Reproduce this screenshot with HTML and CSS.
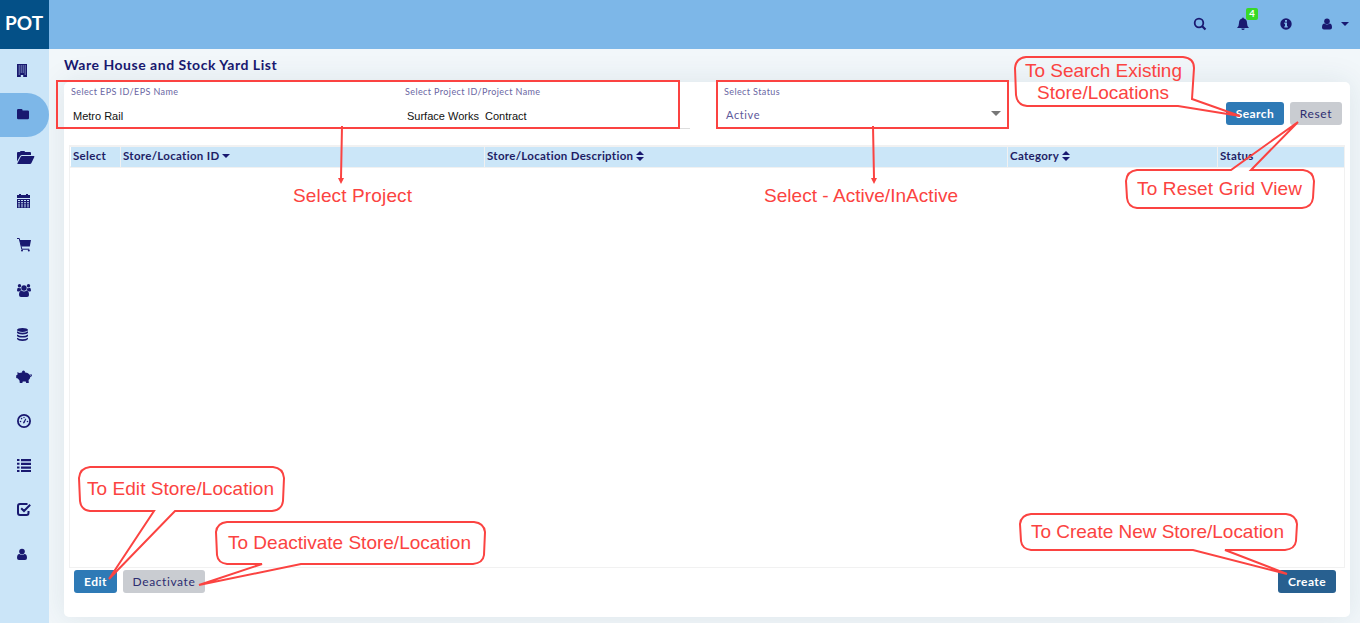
FILE: index.html
```html
<!DOCTYPE html>
<html lang="en">
<head>
<meta charset="utf-8">
<title>Ware House and Stock Yard List</title>
<link rel="stylesheet" href="styles.css">
</head>
<body>
<div class="app">
  <aside class="sidebar">
    <div class="logo"><span>POT</span></div>
    <nav class="menu">
      <a class="item"><svg viewBox="0 0 20 20"><path fill-rule="evenodd" d="M1 3h10v13H7.200v-2h-2.400v2H1zM2.700 4.500v1h1v-1zm2 0v1h1v-1zm2 0v1h1v-1zm2 0v1h1v-1zM2.700 6.500v1h1v-1zm2 0v1h1v-1zm2 0v1h1v-1zm2 0v1h1v-1zM2.700 8.500v1h1v-1zm2 0v1h1v-1zm2 0v1h1v-1zm2 0v1h1v-1zM2.700 10.500v1h1v-1zm2 0v1h1v-1zm2 0v1h1v-1zm2 0v1h1v-1zM2.700 12.500v1h1v-1zm6 0v1h1v-1z"/></svg></a>
      <a class="item active"><svg viewBox="0 0 20 20"><path d="M2.200 4h3.200q1.200 0 1.200 1.400h5.200q1.200 0 1.200 1.200V13q0 1.200-1.200 1.200H2.200Q1 14.200 1 13V5.200Q1 4 2.200 4z"/></svg></a>
      <a class="item"><svg viewBox="0 0 20 20"><path d="M1 12.500V4q0-1 1-1h2q0-1 1-1h3q1 0 1 1h5q1 0 1 1v2H6q-1.200 0-2 1.200zM6 7h11.800q.9 0 .5.900l-3 6.300q-.4.800-1.300.8H1.800q-.8 0-.4-.8l3.200-6.300Q5 7 6 7z"/></svg></a>
      <a class="item"><svg viewBox="0 0 20 20"><path d="M1 2h2V1h2v1h5V1h2v1h2v3H1z"/><path fill-rule="evenodd" d="M1 6h13v9H1zM2 7v1h2V7zm3 0v1h2V7zm3 0v1h2V7zm3 0v1h2V7zM2 9.300v1h2v-1zm3 0v1h2v-1zm3 0v1h2v-1zm3 0v1h2v-1zM2 11.500v1h2v-1zm3 0v1h2v-1zm3 0v1h2v-1zm3 0v1h2v-1zM2 13.500v.8h2v-.8zm3 0v.8h2v-.8zm3 0v.8h2v-.8zm3 0v.8h2v-.8z"/></svg></a>
      <a class="item"><svg viewBox="0 0 20 20"><path d="M1 1.500h2.300L5.800 12.200h7.400" fill="none" stroke="#191970"/><path d="M3.500 3H15l-1.200 6.600H5.400z"/><circle cx="6" cy="13.400" r="1"/><circle cx="12.800" cy="13.400" r="1"/></svg></a>
      <a class="item"><svg viewBox="0 0 20 20"><circle cx="3.500" cy="4.800" r="1.700"/><circle cx="12.500" cy="4.800" r="1.700"/><circle cx="8" cy="7" r="2.700"/><path d="M1 9.500q0-2.700 1.300-2.700 1 .6 2.300.3.100 1.400.9 2.400-1.400 0-2.300 1H2q-1 0-1-1zM15 9.500q0-2.700-1.300-2.700-1 .6-2.300.3-.1 1.400-.9 2.400 1.400 0 2.300 1H14q1 0 1-1zM3 14q0-4.200 2.500-4.200 2.500 1.400 5 0Q13 9.800 13 14q0 2-2 2H5q-2 0-2-2z"/></svg></a>
      <a class="item"><svg viewBox="0 0 20 20"><ellipse cx="6.500" cy="4.900" rx="5.500" ry="2"/><path d="M1 6.300q5.500 3 11 0v1.500q-1.200 1.600-5.500 1.600T1 7.800zM1 9.500q5.500 3 11 0V11q-1.200 1.600-5.500 1.600T1 11zM1 12.700q5.500 3 11 0V14q-1.200 1.900-5.500 1.900T1 14z"/></svg></a>
      <a class="item"><svg viewBox="0 0 20 20"><circle cx="7.500" cy="2.900" r="1.500"/><path d="M1.600 5 1.200 3.300l2.500.6Q7.500 2.800 11.500 3.900q2.300 1 2.700 2.900l.6-.2-.4-1.500.9-.2.700 2-1.700 1q-.2 2-1.700 3.200l.2 2.900h-2.600l-.5-1.400H6.800L6.300 14H3.800l-.3-2.400L1.800 9.500.2 9V6.300l1-.3z"/></svg></a>
      <a class="item"><svg viewBox="0 0 20 20"><circle cx="8" cy="8" r="6.100" fill="none" stroke="#191970" stroke-width="1.800"/><path d="m7 9.500 2.500-4 .8.500-1.800 4q-1.200 1-1.500-.5z"/><circle cx="4.500" cy="8.500" r=".8"/><circle cx="11.500" cy="8.500" r=".8"/><circle cx="5.600" cy="5.600" r=".8"/><circle cx="8" cy="4.500" r=".7"/></svg></a>
      <a class="item"><svg viewBox="0 0 20 20"><path d="M1 2h2.500v2H1zm4 0h10v2.300H5zM1 5.800h2.500v2H1zm4-.1h10V8H5zM1 9.400h2.500v2H1zm4 0h10v2.300H5zM1 13h2.500v2H1zm4 0h10v2H5z"/></svg></a>
      <a class="item"><svg viewBox="0 0 20 20"><path d="M11.500 3H4Q2 3 2 5v7q0 2 2 2h6.500q2 0 2-2v-2M5.200 7.200 8 10l6.200-6.200" fill="none" stroke="#191970" stroke-width="2"/></svg></a>
      <a class="item"><svg viewBox="0 0 20 20"><circle cx="6" cy="6.600" r="2.800"/><path d="M1 13q0-4 2.500-4Q6 11 8.500 9 11 9 11 13q0 2-2 2H3q-2 0-2-2z"/></svg></a>
    </nav>
  </aside>
  <div class="main">
    <header class="topbar">
      <svg class="ico" viewBox="0 0 14 14"><circle cx="6" cy="6" r="4.300" fill="none" stroke="#191970" stroke-width="1.800"/><path d="m9 9 3.500 3.500" stroke="#191970" stroke-width="2.200"/></svg>
      <span class="bell"><svg class="ico" viewBox="0 0 14 14"><path d="M7 .5q.8 0 .8 1Q11 2.200 11 6q0 3.500 2 5H1q2-1.500 2-5 0-3.800 3.200-4.500 0-1 .8-1zM5.300 11.500h3.400Q8.500 13 7 13t-1.700-1.500z"/></svg><b class="badge">4</b></span>
      <svg class="ico" viewBox="0 0 14 14"><path fill-rule="evenodd" d="M7 1.300a5.700 5.700 0 1 0 0 11.400 5.700 5.700 0 0 0 0-11.400zM6 3h2v1.700H6zM5.300 5.600H8v3.600h.8v1.300H5.300V9.200H6V6.900h-.7z"/></svg>
      <span class="account"><svg class="ico" viewBox="0 0 14 14"><circle cx="7" cy="4.300" r="2.800"/><path d="M2 10.500q0-4 2.500-4Q7 8.500 9.500 6.500 12 6.500 12 10.500q0 2-2 2H4q-2 0-2-2z"/></svg><i class="caret"></i></span>
    </header>
    <h1 class="title">Ware House and Stock Yard List</h1>
    <section class="card">
      <div class="filters">
        <div class="project">
          <div class="field"><label>Select EPS ID/EPS Name</label><p class="plain">Metro Rail</p></div>
          <div class="field"><label>Select Project ID/Project Name</label><p class="plain">Surface Works&nbsp; Contract</p></div>
        </div>
        <div class="field status"><label>Select Status</label><p class="select">Active<i class="arrow"></i></p></div>
        <div class="actions"><button class="btn primary search">Search</button><button class="btn muted reset">Reset</button></div>
      </div>
      <div class="grid">
        <div class="head">
          <span>Select</span>
          <span>Store/Location ID<i class="sort"><i class="down"></i></i></span>
          <span>Store/Location Description<i class="sort"><i class="up"></i><i class="down"></i></i></span>
          <span>Category<i class="sort"><i class="up"></i><i class="down"></i></i></span>
          <span>Status</span>
        </div>
      </div>
      <div class="footer">
        <button class="btn primary edit">Edit</button><button class="btn muted deactivate">Deactivate</button>
        <button class="btn dark create">Create</button>
      </div>
    </section>
  </div>
</div>
<svg class="notes" viewBox="0 0 1360 623">
  <g class="line">
    <path d="M57 81h622v47H57zM717 81h291v47H717z"/>
    <path d="M342 126 341 178M873 126 874 178"/>
    <path d="M1026 57H1183Q1194 58 1194 68L1192 99 1240 116 1178 106H1027Q1017 105 1016 95L1015 68Q1016 58 1026 57z"/>
    <path d="M1137 170H1231L1298 122 1251 170H1303Q1313 171 1314 181L1313 198Q1312 207 1302 208H1137Q1128 207 1127 198L1126 181Q1127 171 1137 170z"/>
    <path d="M90 467H273Q283 468 284 478L283 501Q282 510 272 511H175L109 579 154 511H90Q81 510 80 501L79 478Q80 468 90 467z"/>
    <path d="M227 522H474Q484 523 485 532L484 555Q483 563 473 564H301L199 585 262 564H227Q218 563 217 555L216 532Q217 523 227 522z"/>
    <path d="M1031 514H1286Q1296 515 1297 524L1296 541Q1295 549 1285 550H1225L1287 574 1193 550H1031Q1022 549 1021 541L1020 524Q1021 515 1031 514z"/>
  </g>
  <path class="tip" d="M338 178h6l-3 6zM871 178h6l-3 6z"/>
  <g class="words">
    <text x="293" y="202" textLength="119">Select Project</text>
    <text x="764" y="202" textLength="194">Select - Active/InActive</text>
    <text x="1025" y="77" textLength="157">To Search Existing</text>
    <text x="1037" y="99" textLength="132">Store/Locations</text>
    <text x="1137" y="195" textLength="165">To Reset Grid View</text>
    <text x="87" y="495" textLength="187">To Edit Store/Location</text>
    <text x="228" y="549" textLength="243">To Deactivate Store/Location</text>
    <text x="1031" y="538" textLength="253">To Create New Store/Location</text>
  </g>
</svg>
</body>
</html>
```
FILE: styles.css
```css
* { box-sizing: border-box; }
body { margin: 0; height: 623px; overflow: hidden; font-family: Lato, sans-serif; color: #191970; background: #f2f7fa; }
.app { display: flex; height: 623px; }
.sidebar { width: 49px; flex: none; background: #cbe5f8; z-index: 1; }
.logo { height: 49px; background: #045087; color: #fff; font-weight: 700; font-size: 19px; line-height: 45px; padding-left: 5px; letter-spacing: 0; }
.menu { display: flex; flex-direction: column; }
.item { height: 44px; padding-left: 16px; display: flex; align-items: center; }
.item.active { background: #7db7e8; border-radius: 0 22px 22px 0; }
.item svg { width: 20px; height: 20px; fill: #191970; }
.main { flex: 1; display: flex; flex-direction: column; min-width: 0; }
.topbar { height: 49px; flex: none; background: #7db7e8; display: flex; align-items: center; justify-content: flex-end; gap: 29px; padding: 0 11px 2px 0; z-index: 1; }
.ico { width: 14px; height: 14px; fill: #191970; display: block; }
.bell { position: relative; }
.badge { position: absolute; left: 10px; top: -9px; width: 12px; height: 12px; border-radius: 2px; background: #38d926; color: #fff; font-size: 9.500px; line-height: 11px; text-align: center; }
.account { display: flex; align-items: center; gap: 7px; margin-left: -2px; }
.caret { border: 4px solid transparent; border-top-color: #191970; border-bottom: 0; }
.title { margin: 0; padding-left: 15px; height: 33px; line-height: 32px; font-size: 14px; font-weight: 700; letter-spacing: .52px; white-space: nowrap; }
.card { margin: 0 10px 0 15px; height: 535px; background: #fff; border-radius: 5px; box-shadow: 0 0 30px rgba(30, 70, 90, .1); padding: 0 5px; }
.filters { display: flex; height: 63px; }
.project { display: flex; width: 619px; height: 47px; margin-left: 2px; border-bottom: 1px solid #ddd; }
.field { width: 334px; flex: none; padding-top: 4px; }
.field + .field { width: 285px; }
.field label { display: block; font-size: 9px; line-height: 12px; letter-spacing: .4px; color: #6a66a3; white-space: nowrap; }
.plain { margin: 11px 0 0 2px; font: 11px/14px "Liberation Sans", sans-serif; color: #111; }
.status { width: 284px; margin-left: 34px; }
.select { margin: 9px 7px 0 2px; font-size: 11px; line-height: 16px; letter-spacing: .6px; color: #5d599b; display: flex; justify-content: space-between; align-items: center; }
.arrow { border: 5px solid transparent; border-top-color: #777; border-bottom: 0; margin-bottom: 3px; }
.actions { margin-left: auto; padding: 20px 3px 0 0; display: flex; gap: 6px; }
.btn { height: 23px; border: 0; border-radius: 3px; padding: 0; font: 700 12px/24px Lato, sans-serif; letter-spacing: .45px; color: #fff; text-align: center; }
.primary { background: #2e7ab6; }
.dark { background: #286090; }
.muted { background: #c9ccd1; color: #2d2d70; font-weight: 400; letter-spacing: .6px; }
.search { width: 58px; }
.reset { width: 52px; }
.grid { height: 423px; border: 1px solid #f1f1f1; }
.head { height: 22px; border: solid #f1f1f1; border-width: 1px 0 2px; margin: 0; display: grid; grid-template-columns: 50px 364px 523px 210px 1fr; font-size: 11.500px; font-weight: 700; letter-spacing: .3px; line-height: 18px; color: #1e1e66; padding: 0 0 0 1px; }
.head span { background: #cbe6f8; padding: 0 0 2px 2px; border-right: 1px solid #f1f1f1; white-space: nowrap; display: flex; align-items: center; gap: 3px; }
.head span:last-child { border-right: 0; }
.sort { display: flex; flex-direction: column; gap: 2px; }
.up, .down { border: 4px solid transparent; }
.up { border-bottom-color: #191970; border-top: 0; }
.down { border-top-color: #191970; border-bottom: 0; }
.footer { display: flex; gap: 6px; padding: 2px 9px 0 5px; }
.edit { width: 43px; }
.deactivate { width: 82px; }
.create { width: 58px; margin-left: auto; }
.notes { position: absolute; left: 0; top: 0; width: 1360px; height: 623px; }
.line { fill: none; stroke: #fb4341; stroke-width: 2; }
.tip { fill: #fb4341; }
.words { font: 19px "Liberation Sans", sans-serif; fill: #fb4341; }
```
